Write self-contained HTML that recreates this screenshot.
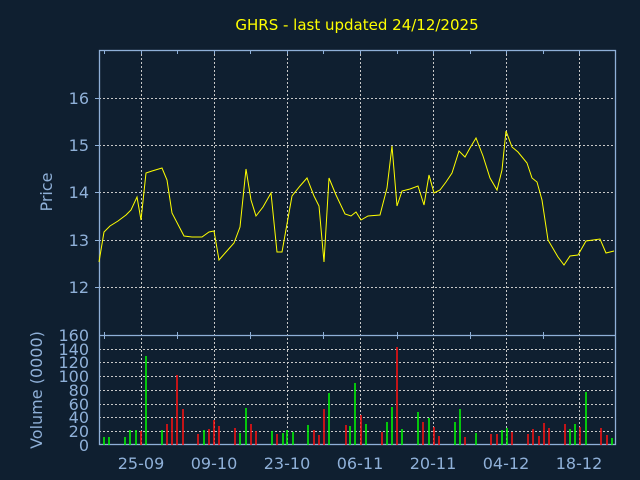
<!DOCTYPE html>
<html><head><meta charset="utf-8"><style>
html,body{margin:0;padding:0;background:#0f1f30;}
svg{display:block;}
text{font-family:"DejaVu Sans","Liberation Sans",sans-serif;}
</style></head><body>
<svg width="640" height="480" xmlns="http://www.w3.org/2000/svg">
<rect width="640" height="480" fill="#0f1f30"/>
<text x="357" y="30" fill="#ffff00" font-size="15" text-anchor="middle">GHRS - last updated 24/12/2025</text>
<g stroke="#c8c8c8" stroke-dasharray="2,2" stroke-width="1">
<line x1="99" y1="98.5" x2="615" y2="98.5"/><line x1="99" y1="145.5" x2="615" y2="145.5"/><line x1="99" y1="192.5" x2="615" y2="192.5"/><line x1="99" y1="240.5" x2="615" y2="240.5"/><line x1="99" y1="287.5" x2="615" y2="287.5"/>
<line x1="99" y1="349.5" x2="615" y2="349.5"/><line x1="99" y1="362.5" x2="615" y2="362.5"/><line x1="99" y1="376.5" x2="615" y2="376.5"/><line x1="99" y1="390.5" x2="615" y2="390.5"/><line x1="99" y1="404.5" x2="615" y2="404.5"/><line x1="99" y1="417.5" x2="615" y2="417.5"/><line x1="99" y1="431.5" x2="615" y2="431.5"/>
<line x1="141.5" y1="50" x2="141.5" y2="445"/><line x1="214.5" y1="50" x2="214.5" y2="445"/><line x1="287.5" y1="50" x2="287.5" y2="445"/><line x1="360.5" y1="50" x2="360.5" y2="445"/><line x1="433.5" y1="50" x2="433.5" y2="445"/><line x1="506.5" y1="50" x2="506.5" y2="445"/><line x1="579.5" y1="50" x2="579.5" y2="445"/>
</g>
<g fill="none" stroke="#8fb0d8" stroke-width="1.3">
<rect x="99.5" y="50.5" width="516" height="394"/>
<line x1="99" y1="335.5" x2="615" y2="335.5"/>
</g>
<g stroke="#8fb0d8" stroke-width="1">
<path d="M104.5 50v4M141.5 50v4M177.5 50v4M214.5 50v4M250.5 50v4M287.5 50v4M323.5 50v4M360.5 50v4M397.5 50v4M433.5 50v4M470.5 50v4M506.5 50v4M543.5 50v4M579.5 50v4"/>
<path d="M104.5 332v7M177.5 332v7M250.5 332v7M323.5 332v7M397.5 332v7M470.5 332v7M543.5 332v7"/>
<path d="M95 98.5h4M95 145.5h4M95 192.5h4M95 240.5h4M95 287.5h4"/>
</g>
<polyline fill="none" stroke="#ffff00" stroke-width="1" points="99,262 104,232 110,226 118,221 126,215 131,210 137,197 141,220 146,173 152,171 162,168 167,180 172,213 184,236 192,237 202,237 209,232 214,231 219,260 226,252 234,243 240,227 246,169 251,200 256,216 263,207 271,193 277,252 282,252 292,196 300,186 307,178 314,196 319,206 324,262 329,178 336,195 345,214 351,216 356,212 361,220 368,216 380,215 387,188 392,146 397,206 402,191 410,189 418,186 424,205 429,175 434,193 440,190 446,182 452,173 459,151 465,157 470,148 476,138 483,156 490,178 497,190 502,170 506,131 512,147 518,152 527,163 532,178 537,182 542,200 548,240 558,257 564,265 570,256 578,255 586,241 600,239 606,253 614,251"/>
<g stroke-width="1.5">
<g stroke="#00ff00"><path d="M104 445V437M109 445V437M125 445V437M130 445V430M136 445V430M146 445V356M162 445V430M204 445V430M240 445V433M246 445V408M272 445V431M283 445V433M287 445V430M293 445V432M308 445V425M329 445V393M350 445V426M355 445V383M366 445V424M387 445V422M392 445V407M402 445V429M418 445V412M429 445V418M455 445V422M460 445V409M476 445V433M502 445V430M507 445V428M570 445V429M575 445V424M586 445V392M612 445V438"/></g>
<g stroke="#ff1010"><path d="M141 445V431M167 445V424M172 445V418M177 445V375M183 445V409M198 445V434M209 445V429M214 445V420M219 445V426M235 445V428M251 445V424M256 445V431M277 445V434M314 445V430M319 445V435M324 445V409M346 445V425M361 445V415M382 445V432M397 445V347M423 445V422M434 445V427M439 445V436M465 445V437M491 445V434M497 445V434M512 445V432M528 445V434M533 445V429M539 445V436M544 445V423M549 445V428M565 445V424M580 445V427M601 445V428M607 445V435"/></g>
</g>
<g fill="#8fb0d8" font-size="16" text-anchor="end">
<text x="89" y="104">16</text><text x="89" y="151">15</text><text x="89" y="198">14</text><text x="89" y="246">13</text><text x="89" y="293">12</text>
</g>
<g fill="#8fb0d8" font-size="16" text-anchor="end">
<text x="89" y="341">160</text><text x="89" y="355">140</text><text x="89" y="368">120</text><text x="89" y="382">100</text><text x="89" y="396">80</text><text x="89" y="410">60</text><text x="89" y="423">40</text><text x="89" y="437">20</text><text x="89" y="451">0</text>
</g>
<g fill="#8fb0d8" font-size="16" text-anchor="middle">
<text x="141" y="469">25-09</text><text x="214" y="469">09-10</text><text x="287" y="469">23-10</text><text x="360" y="469">06-11</text><text x="433" y="469">20-11</text><text x="506" y="469">04-12</text><text x="579" y="469">18-12</text>
</g>
<text transform="translate(52,192) rotate(-90)" fill="#8fb0d8" font-size="16" text-anchor="middle">Price</text>
<text transform="translate(42,390) rotate(-90)" fill="#8fb0d8" font-size="16" text-anchor="middle">Volume (0000)</text>
</svg>
</body></html>
